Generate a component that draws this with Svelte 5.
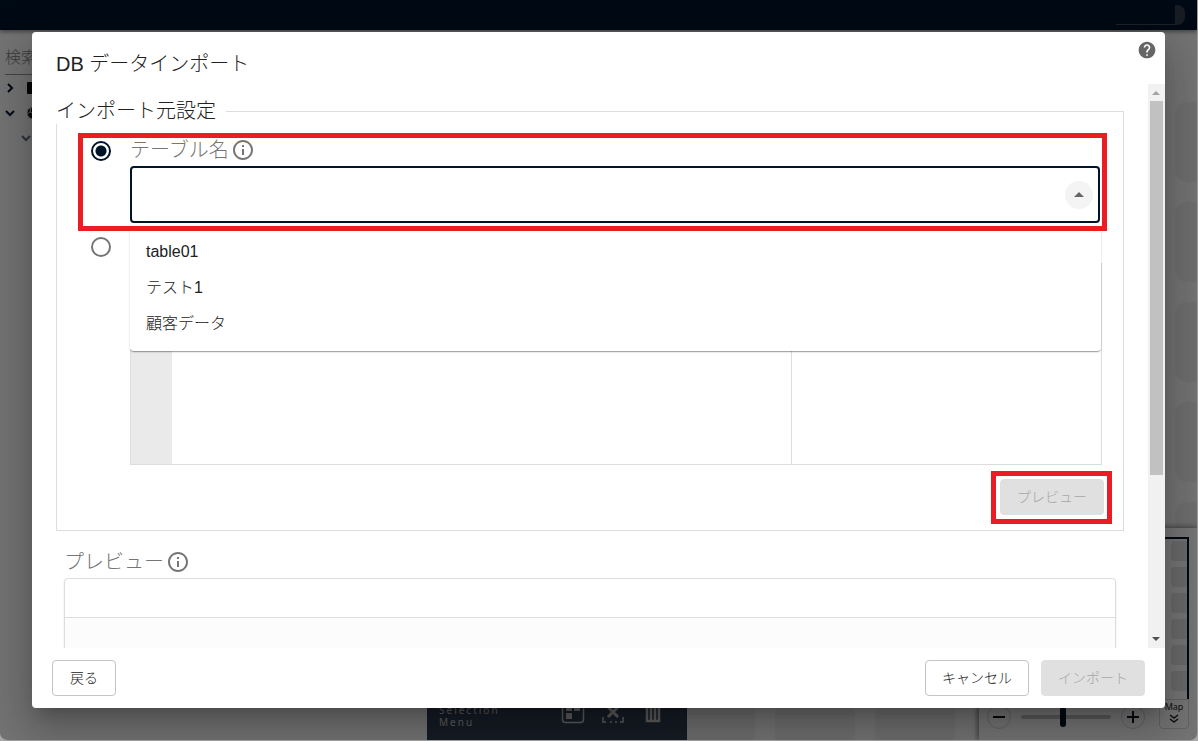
<script>
  const tables = ['table01', 'テスト1', '顧客データ'];
  const cells = Array.from({ length: 42 });
  const tiles = Array.from({ length: 48 });

  let source = $state('table');
  let tableName = $state('');
  let query = $state('');
  let open = $state(true);
  let zoom = $state(46);

  function choose(name) {
    tableName = name;
    open = false;
  }
</script>

{#snippet info()}
  <svg class="icon" viewBox="0 0 24 24" aria-hidden="true">
    <path d="M11 7h2v2h-2zm0 4h2v6h-2zm1-9C6.48 2 2 6.48 2 12s4.48 10 10 10 10-4.480 10-10S17.52 2 12 2zm0 18c-4.410 0-8-3.590-8-8s3.590-8 8-8 8 3.590 8 8-3.590 8-8 8z" />
  </svg>
{/snippet}

<div class="app">
  <header class="topbar">
    <span class="user-line"></span>
    <span class="user-tab"></span>
  </header>

  <div class="workspace">
    <aside class="sidebar">
      <input class="search" type="search" placeholder="検索" aria-label="検索" />
      <ul class="tree">
        <li>
          <svg viewBox="0 0 10 10"><path d="M3 1l4 4-4 4" /></svg>
          <svg class="solid" viewBox="0 0 12 12"><rect width="12" height="12" rx="1" /></svg>
        </li>
        <li>
          <svg viewBox="0 0 10 10"><path d="M1 3l4 4 4-4" /></svg>
          <svg class="solid" viewBox="0 0 12 12"><circle cx="6" cy="6" r="6" /><path d="M4 0L3 5l-3 2M3 5l4 2-1 5" /></svg>
        </li>
        <li class="child">
          <svg viewBox="0 0 10 10"><path d="M1 3l4 4 4-4" /></svg>
        </li>
      </ul>
    </aside>

    <main class="canvas">
      <div class="cells">
        {#each cells as _}<span></span>{/each}
      </div>

      <div class="toolbar">
        <span class="toolbar-label">Selection<br />Menu</span>
        <svg viewBox="0 0 24 24">
          <rect x="1.500" y="1.500" width="21" height="21" rx="3" />
          <path class="fill" d="M5 5h6v6H5zM13 5h6v6h-6zM5 13h6v6H5z" />
        </svg>
        <svg viewBox="0 0 24 24">
          <path class="thick" d="M7 7l10 10M17 7L7 17" />
          <path d="M2 17v5h3M9 22h2M14 22h2M19 22h3v-5" />
        </svg>
        <svg viewBox="0 0 24 24">
          <path class="bin" d="M6 4v17h12V4M10 4v17M14 4v17" /><path d="M4 3h16" />
        </svg>
      </div>

      <section class="map-panel">
        <div class="minimap">
          {#each tiles as _}<span></span>{/each}
        </div>
        <div class="map-controls">
          <button class="round" aria-label="縮小"><svg viewBox="0 0 12 12"><path d="M0 6h12" /></svg></button>
          <input type="range" bind:value={zoom} aria-label="倍率" />
          <button class="round" aria-label="拡大"><svg viewBox="0 0 12 12"><path d="M0 6h12M6 0v12" /></svg></button>
          <button class="map-toggle">
            <span>Map</span>
            <svg viewBox="0 0 10 10"><path d="M1 1l4 3 4-3M1 5l4 3 4-3" /></svg>
          </button>
        </div>
      </section>
    </main>
  </div>

  <div class="backdrop">
    <div class="dialog" role="dialog" aria-modal="true" aria-labelledby="dialog-title">
      <div class="dialog-head">
        <h2 id="dialog-title">DB データインポート</h2>
        <button class="help" aria-label="ヘルプ">
          <svg viewBox="0 0 24 24"><path d="M12 2C6.480 2 2 6.480 2 12s4.480 10 10 10 10-4.480 10-10S17.520 2 12 2zm1 17h-2v-2h2v2zm2.070-7.750l-.9.920C13.450 12.900 13 13.500 13 15h-2v-.5c0-1.100.450-2.100 1.170-2.830l1.240-1.260c.370-.360.590-.860.590-1.410 0-1.100-.9-2-2-2s-2 .9-2 2H8c0-2.210 1.790-4 4-4s4 1.790 4 4c0 .880-.360 1.680-.930 2.250z" /></svg>
        </button>
      </div>

      <div class="dialog-body">
        <div class="content">
          <fieldset>
            <legend>インポート元設定</legend>

            <div class="row marked">
              <input type="radio" name="source" value="table" bind:group={source} aria-label="テーブル名" />
              <div class="field">
                <label class="caption" for="table-name">テーブル名{@render info()}</label>
                <div class="combo">
                  <input id="table-name" type="text" role="combobox" aria-expanded={open} aria-controls="table-list" autocomplete="off" bind:value={tableName} />
                  <button class="toggle" aria-label="一覧" onclick={() => (open = !open)}>
                    <svg class="icon" viewBox="0 0 24 24"><path d="M7 14l5-5 5 5z" /></svg>
                  </button>
                  {#if open}
                    <div class="menu" id="table-list" role="listbox">
                      {#each tables as name}
                        <button role="option" aria-selected={name === tableName} onclick={() => choose(name)}>{name}</button>
                      {/each}
                    </div>
                  {/if}
                </div>
              </div>
            </div>

            <div class="row query">
              <input type="radio" name="source" value="query" bind:group={source} aria-label="SQL" />
              <div class="editor">
                <span class="gutter"></span>
                <textarea aria-label="SQL" bind:value={query}></textarea>
                <span class="params"></span>
              </div>
            </div>

            <div class="actions">
              <div class="marked">
                <button class="btn" disabled>プレビュー</button>
              </div>
            </div>
          </fieldset>

          <section class="preview">
            <h3 class="caption">プレビュー{@render info()}</h3>
            <div class="result">
              <div class="result-head"></div>
            </div>
          </section>
        </div>

        <div class="scrollbar" aria-hidden="true">
          <svg class="muted" viewBox="0 0 17 17"><path d="M4 11h8L8 7z" /></svg>
          <div class="track"><div class="thumb"></div></div>
          <svg viewBox="0 0 17 17"><path d="M4 6h8l-4 4z" /></svg>
        </div>
      </div>

      <div class="dialog-foot">
        <button class="btn">戻る</button>
        <span class="spacer"></span>
        <button class="btn">キャンセル</button>
        <button class="btn" disabled>インポート</button>
      </div>
    </div>
  </div>
</div>

<style>
  :global(body) {
    background: #a8a8a8;
  }

  .app,
  .app * {
    box-sizing: border-box;
  }

  .app {
    position: relative;
    display: flex;
    flex-direction: column;
    height: 100vh;
    overflow: hidden;
    border: solid #9c9c9c;
    border-width: 0 1px 1px 0;
    border-radius: 0 0 8px 8px;
    background: #e6e6e6;
    color: #212121;
    font-family: 'Liberation Sans', 'Noto Sans CJK JP', sans-serif;
    font-weight: 300;
    font-size: 16px;
  }

  button,
  input,
  textarea {
    margin: 0;
    padding: 0;
    border: 0;
    background: none;
    color: inherit;
    font: inherit;
  }

  button:not(:disabled) {
    cursor: pointer;
  }

  .icon {
    width: 24px;
    height: 24px;
    fill: currentColor;
  }

  /* Page behind the dialog */
  .topbar {
    display: flex;
    flex: 0 0 30px;
    justify-content: flex-end;
    padding: 5px 12px 5px 0;
    background: #001429;
    box-shadow: 0 2px 4px rgba(0, 0, 0, 0.4);
  }

  .user-line {
    width: 59px;
    border-bottom: 1px solid #3c4654;
  }

  .user-tab {
    width: 10px;
    border-radius: 0 8px 8px 0;
    background: #303a48;
  }

  .workspace {
    display: flex;
    flex: 1;
    min-height: 0;
  }

  .sidebar {
    flex: 0 0 275px;
    padding: 12px 5px;
  }

  .search {
    width: 100%;
    height: 33px;
    border-bottom: 1px solid #888;
    outline: 0;
  }

  .search::placeholder {
    color: #777;
    opacity: 1;
  }

  .tree {
    margin: 0;
    padding: 0;
    list-style: none;
  }

  .tree li {
    display: flex;
    align-items: center;
    gap: 12px;
    height: 25px;
  }

  .tree .child {
    padding-left: 16px;
    opacity: 0.6;
  }

  .tree svg {
    width: 10px;
    height: 10px;
    fill: none;
    stroke: #00122b;
    stroke-width: 2;
  }

  .tree .solid {
    width: 12px;
    height: 12px;
    fill: #101010;
    stroke: #bbb;
    stroke-width: 1;
  }

  .tree rect {
    stroke: none;
  }

  .canvas {
    position: relative;
    flex: 1;
    overflow: hidden;
  }

  .cells {
    display: grid;
    grid-template-columns: repeat(6, 80px);
    grid-auto-rows: 80px;
    gap: 20px;
    padding: 72px 0 0 400px;
  }

  .cells span {
    border-radius: 12px;
    background: #dcdcdc;
  }

  .toolbar {
    position: absolute;
    bottom: 0;
    left: 152px;
    display: flex;
    align-items: center;
    gap: 16px;
    width: 260px;
    height: 56px;
    padding: 0 22px 0 12px;
    background: #2c394b;
    color: #b8b8b8;
  }

  .toolbar-label {
    flex: 1;
    padding-top: 8px;
    font: 400 10px/12px 'Noto Sans', sans-serif;
    letter-spacing: 2px;
  }

  .toolbar svg {
    width: 24px;
    height: 24px;
    fill: none;
    stroke: #b8b8b8;
    stroke-width: 1.5;
  }

  .toolbar .fill {
    fill: #b8b8b8;
    stroke: none;
  }

  .toolbar .thick {
    stroke-width: 3;
  }

  .toolbar .bin {
    stroke-width: 2.5;
  }

  .map-panel {
    position: absolute;
    right: 0;
    bottom: 0;
    display: flex;
    flex-direction: column;
    width: 218px;
    height: 212px;
    padding: 9px 8px 11px;
    border-radius: 4px 0 8px;
    background: #e9e9e9;
    box-shadow: 0 0 6px rgba(0, 0, 0, 0.6);
  }

  .minimap {
    display: grid;
    flex: 1;
    grid-template-columns: repeat(8, 20px);
    grid-auto-rows: 20px;
    gap: 6px;
    padding-top: 2px;
    overflow: hidden;
    border: 2px solid #001429;
    border-bottom: 0;
  }

  .minimap span {
    border-radius: 4px;
    background: #d2d2d2;
  }

  .map-controls {
    display: flex;
    align-items: center;
    gap: 10px;
    height: 30px;
    padding-top: 6px;
  }

  .round {
    display: grid;
    place-items: center;
    flex: none;
    width: 24px;
    height: 24px;
    border: 1px solid #c4c4c4;
    border-radius: 50%;
  }

  .round svg {
    width: 12px;
    stroke: #10151d;
    stroke-width: 2;
  }

  .map-controls input {
    flex: 1;
    min-width: 0;
    height: 22px;
    appearance: none;
  }

  .map-controls input::-webkit-slider-runnable-track {
    height: 4px;
    border-radius: 2px;
    background: #b4b4b4;
  }

  .map-controls input::-webkit-slider-thumb {
    width: 6px;
    height: 20px;
    margin-top: -8px;
    appearance: none;
    border-radius: 3px;
    background: #001429;
  }

  .map-toggle {
    display: flex;
    flex: none;
    flex-direction: column;
    align-items: center;
    align-self: flex-end;
    justify-content: flex-end;
    gap: 2px;
    width: 30px;
    height: 30px;
    margin-left: 4px;
    padding-bottom: 4px;
    border: 1px solid #c4c4c4;
    border-radius: 0 0 4px 4px;
    font: 400 9px/10px 'Noto Sans', sans-serif;
  }

  .map-toggle svg {
    width: 10px;
    height: 10px;
    flex: none;
    fill: none;
    stroke: #222;
    stroke-width: 1.5;
  }

  /* Dialog */
  .backdrop {
    position: absolute;
    inset: 0;
    display: flex;
    padding: 32px;
    background: rgba(0, 0, 0, 0.5);
  }

  .dialog {
    display: flex;
    flex: 1;
    flex-direction: column;
    min-width: 0;
    border-radius: 4px;
    background: #fff;
    box-shadow:
      0 11px 15px -7px rgba(0, 0, 0, 0.2),
      0 24px 38px 3px rgba(0, 0, 0, 0.14),
      0 9px 46px 8px rgba(0, 0, 0, 0.12);
  }

  .dialog-head {
    display: flex;
    flex: 0 0 52px;
    align-items: flex-start;
    justify-content: space-between;
    padding: 8px 8px 0 24px;
  }

  h2 {
    margin: 9px 0 0;
    font-weight: 300;
    font-size: 20px;
    line-height: 30px;
  }

  .help {
    width: 20px;
    height: 20px;
    color: #666;
  }

  .help svg {
    display: block;
    width: 20px;
    height: 20px;
    fill: currentColor;
  }

  .dialog-body {
    display: flex;
    flex: 1;
    min-height: 0;
  }

  .content {
    flex: 1;
    min-width: 0;
    padding: 14px 24px 0;
    overflow: hidden;
  }

  fieldset {
    min-width: 0;
    margin: 0;
    padding: 9px 11px 6px 21px;
    border: 1px solid #ddd;
  }

  legend {
    margin-left: -22px;
    padding: 0 10px 0 0;
    background: #fff;
    font-size: 20px;
    line-height: 26px;
  }

  .row {
    position: relative;
    display: flex;
    gap: 19px;
    padding-left: 13px;
  }

  .row.marked {
    margin-right: 5px;
    padding: 5px 7px 8px 13px;
  }

  .marked {
    position: relative;
  }

  .marked::after {
    position: absolute;
    z-index: 3;
    inset: 0;
    border: 5px solid #ea1c24;
    content: '';
    pointer-events: none;
  }

  input[type='radio'] {
    flex: none;
    width: 20px;
    height: 20px;
    margin-top: 3px;
    appearance: none;
    border: 2px solid #757575;
    border-radius: 50%;
  }

  input[type='radio']:checked {
    border-color: #001429;
    background: radial-gradient(circle, #001429 5px, transparent 6px);
  }

  .field {
    flex: 1;
    min-width: 0;
  }

  .caption {
    display: flex;
    align-items: center;
    gap: 2px;
    height: 24px;
    margin: 0 0 4px;
    color: #757575;
    font-weight: 300;
    font-size: 20px;
    line-height: 24px;
  }

  .combo {
    position: relative;
    display: flex;
    align-items: center;
    height: 57px;
    padding: 0 5px 0 12px;
    border: 2px solid #001429;
    border-radius: 4px;
  }

  .combo input {
    flex: 1;
    min-width: 0;
    height: 100%;
    outline: 0;
  }

  .toggle {
    display: grid;
    place-items: center;
    width: 28px;
    height: 28px;
    border-radius: 50%;
    background: #f4f4f4;
    color: #666;
  }

  .menu {
    position: absolute;
    z-index: 2;
    top: 100%;
    right: -3px;
    left: -2px;
    margin-top: 2px;
    padding: 11px 0 9px;
    border-radius: 0 0 4px 4px;
    background: #fff;
    box-shadow:
      0 2px 1px -1px rgba(0, 0, 0, 0.2),
      0 1px 1px rgba(0, 0, 0, 0.14),
      0 1px 3px rgba(0, 0, 0, 0.12);
  }

  .menu button {
    display: block;
    width: 100%;
    height: 36px;
    padding: 0 16px;
    line-height: 36px;
    text-align: left;
  }

  .query {
    margin-right: 10px;
    padding-top: 3px;
  }

  .editor {
    display: flex;
    flex: 1;
    height: 202px;
    margin-top: 29px;
    border: 1px solid #ddd;
  }

  .gutter {
    width: 41px;
    background: #eaeaea;
  }

  .editor textarea {
    flex: 2;
    min-width: 0;
    outline: 0;
    resize: none;
  }

  .params {
    flex: 1;
    border-left: 1px solid #ddd;
  }

  .actions {
    display: flex;
    justify-content: flex-end;
    margin-top: 6px;
  }

  .actions .marked {
    padding: 8px 8px 9px 9px;
  }

  .btn {
    display: block;
    min-width: 64px;
    height: 36px;
    padding: 0 16px 2px;
    border: 1px solid #c4c4c4;
    border-radius: 4px;
    font-size: 14px;
    white-space: nowrap;
  }

  .btn:disabled {
    border-color: #e0e0e0;
    background: #e0e0e0;
    color: #a6a6a6;
  }

  .preview {
    padding: 19px 8px 0;
  }

  .result {
    height: 200px;
    border: 1px solid #ddd;
    border-radius: 4px;
    background: #fcfcfc;
    box-shadow: 0 1px 2px rgba(0, 0, 0, 0.12);
  }

  .result-head {
    height: 39px;
    border-bottom: 1px solid #ddd;
    border-radius: 4px 4px 0 0;
    background: #fff;
  }

  .scrollbar {
    display: flex;
    flex: 0 0 17px;
    flex-direction: column;
    background: #f1f1f1;
  }

  .scrollbar svg {
    flex: none;
    height: 17px;
    fill: #505050;
  }

  .scrollbar .muted {
    fill: #a3a3a3;
  }

  .track {
    flex: 1;
    padding: 0 2px;
  }

  .thumb {
    height: 70.6%;
    background: #c1c1c1;
  }

  .dialog-foot {
    display: flex;
    flex: 0 0 60px;
    align-items: center;
    gap: 12px;
    padding: 0 20px;
  }

  .spacer {
    flex: 1;
  }
</style>
